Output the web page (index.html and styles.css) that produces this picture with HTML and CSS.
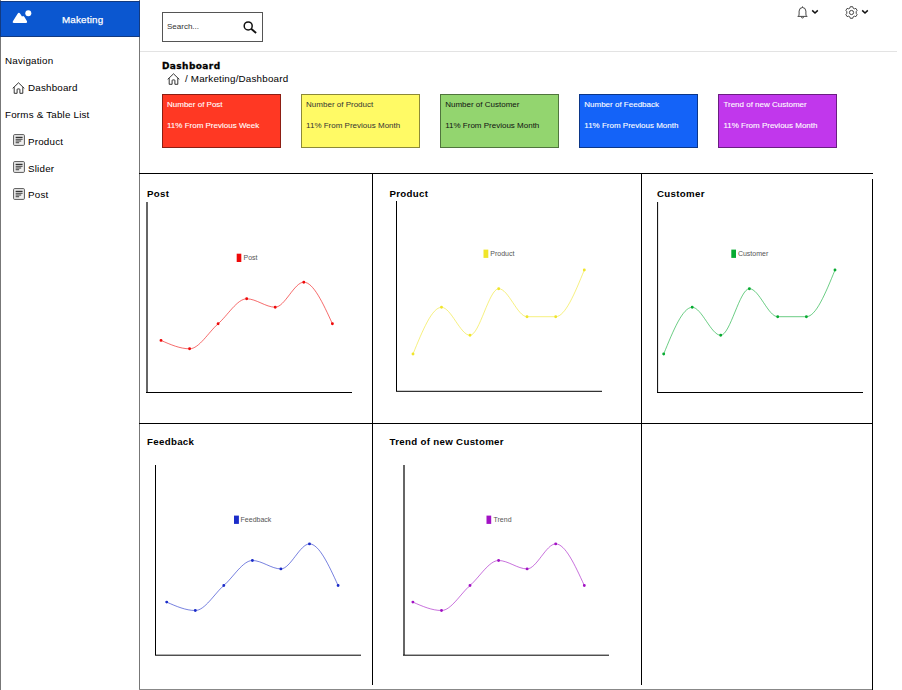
FILE: index.html
```html
<!DOCTYPE html>
<html lang="en">
<head>
<meta charset="utf-8">
<title>Marketing Dashboard</title>
<link rel="stylesheet" href="styles.css">
</head>
<body>
<svg class="defs" aria-hidden="true">
  <symbol id="home" viewBox="0 0 13 12"><path d="M.7 6.400 6.500.8l5.800 5.600M2.200 5.200v6.100h2.900V7.600q0-.7.7-.7h1.400q.7 0 .7.7v3.700h2.900V5.200" fill="none" stroke="currentColor" stroke-width=".8"/></symbol>
  <symbol id="form" viewBox="0 0 12 12"><rect x=".6" y=".6" width="10.800" height="10.800" rx="1" fill="#f0f0f0" stroke="#444" stroke-width=".9"/><path d="M2.600 3.400h7M2.600 5.200h7M2.600 7h5.600M2.600 8.800h3.600" stroke="#333" stroke-width="1.100"/></symbol>
  <symbol id="chevron" viewBox="0 0 8 6"><path d="M1.200 1.400 4 4l2.800-2.600" fill="none" stroke="#111" stroke-width="1.500"/></symbol>
  <g id="wave-a">
    <path d="M0 0C9.500 4.200 19.100 8.400 28.600 8.400S47.600-8.300 57.100-16.600S76.200-41.600 85.700-41.600S104.700-33.200 114.200-33.200S133.300-58.200 142.800-58.200S161.900-37.400 171.400-16.600" fill="none" stroke="currentColor" stroke-width=".6"/>
    <path class="dots" d="M0 0h0M28.600 8.400h0M57.100-16.600h0M85.700-41.600h0M114.200-33.200h0M142.800-58.200h0M171.400-16.600h0"/>
  </g>
  <g id="wave-b">
    <path d="M0 0C9.500-23.300 19-46.700 28.500-46.700S47.500-18.700 57-18.700S76-65.300 85.700-65.300S104.500-37.300 114-37.300H142.700C152.200-37.300 161.800-60.700 171.300-84" fill="none" stroke="currentColor" stroke-width=".6"/>
    <path class="dots" d="M0 0h0M28.500-46.700h0M57-18.700h0M85.700-65.300h0M114-37.300h0M142.700-37.300h0M171.300-84h0"/>
  </g>
</svg>
<div class="app">
  <aside class="sidebar">
    <div class="brand">
      <svg class="logo" width="20" height="14" viewBox="0 0 20 14"><path d="M1.800 13Q0 13 .9 11.300L5.600 3.700Q6.900 1.900 8.200 3.700L10 6.500Q11.200 5.400 12.300 6.700L15 11.300Q15.700 13 14 13Z" fill="#fff"/><circle cx="16.300" cy="3.200" r="3" fill="#fff"/></svg>
      <span>Maketing</span>
    </div>
    <nav class="menu">
      <div class="group">Navigation</div>
      <a class="item"><svg width="13" height="12"><use href="#home"/></svg>Dashboard</a>
      <div class="group">Forms &amp; Table List</div>
      <a class="item"><svg class="form" width="12" height="12"><use href="#form"/></svg>Product</a>
      <a class="item"><svg class="form" width="12" height="12"><use href="#form"/></svg>Slider</a>
      <a class="item"><svg class="form" width="12" height="12"><use href="#form"/></svg>Post</a>
    </nav>
  </aside>
  <main class="main">
    <header class="topbar">
      <div class="search"><span>Search...</span>
        <svg width="14" height="13" viewBox="0 0 14 13"><circle cx="5.200" cy="4.900" r="4" fill="none" stroke="#111" stroke-width="1.500"/><path d="m8.200 7.700 4.900 4.300" stroke="#111" stroke-width="1.900"/></svg>
      </div>
      <div class="actions">
        <div class="action">
          <svg width="11" height="13" viewBox="0 0 11 13"><path d="M.6 10.400h9.800M1.500 10.200q.6-.8.6-2.200V5.100Q2.300 1.600 5.500 1.500q3.200.1 3.400 3.600V8q0 1.400.6 2.200M5.500 1.500V.4M4.300 10.800q.2 1.200 1.200 1.200t1.200-1.200" fill="none" stroke="#333" stroke-width=".9"/></svg>
          <svg width="8" height="6"><use href="#chevron"/></svg>
        </div>
        <div class="action">
          <svg width="13" height="13" viewBox="0 0 13 13"><path d="m5.300.7h2.400l.5 1.500 1.200.6 1.500-.4 1.200 2-.9 1.300v1.600l.9 1.300-1.200 2-1.500-.4-1.200.6-.5 1.500H5.300l-.5-1.500-1.200-.6-1.500.4-1.200-2 .9-1.300V5.700L.9 4.400l1.200-2 1.500.4 1.200-.6Z" fill="none" stroke="#333" stroke-width=".9"/><circle cx="6.500" cy="6.500" r="2.100" fill="none" stroke="#333" stroke-width=".9"/></svg>
          <svg width="8" height="6"><use href="#chevron"/></svg>
        </div>
      </div>
    </header>
    <section class="intro">
      <h1>Dashboard</h1>
      <div class="crumbs"><svg width="13" height="12"><use href="#home"/></svg>/ Marketing/Dashboard</div>
      <div class="cards">
        <div class="card red"><p>Number of Post</p><p>11% From Previous Week</p></div>
        <div class="card yellow"><p>Number of Product</p><p>11% From Previous Month</p></div>
        <div class="card green"><p>Number of Customer</p><p>11% From Previous Month</p></div>
        <div class="card blue"><p>Number of Feedback</p><p>11% From Previous Month</p></div>
        <div class="card purple"><p>Trend of new Customer</p><p>11% From Previous Month</p></div>
      </div>
    </section>
    <section class="charts">
      <article class="cell first">
        <h2>Post</h2>
        <svg class="plot c-red" width="232" height="221" viewBox="140 201 232 221">
          <path d="M147 202V392" stroke="#666" stroke-width="2"/><path d="M146 392.500H352" stroke="#000"/>
          <rect x="236.700" y="253.700" width="4.600" height="8.300"/><text x="243.500" y="260">Post</text>
          <use href="#wave-a" x="161" y="340.400"/>
        </svg>
      </article>
      <article class="cell">
        <h2>Product</h2>
        <svg class="plot c-yellow" width="268" height="221" viewBox="373 201 268 221">
          <path d="M396.500 201V391M396 391.300H602" stroke="#000" fill="none"/>
          <rect x="483.500" y="249.600" width="4.800" height="8.300"/><text x="490.300" y="256">Product</text>
          <use href="#wave-b" x="413" y="354"/>
        </svg>
      </article>
      <article class="cell short">
        <h2>Customer</h2>
        <svg class="plot c-green" width="230" height="221" viewBox="642 201 230 221">
          <path d="M657.600 202V392M657 392.500H863" stroke="#000" fill="none"/>
          <rect x="731.300" y="249.600" width="4.700" height="8.300"/><text x="737.900" y="256">Customer</text>
          <use href="#wave-b" x="663.700" y="354"/>
        </svg>
      </article>
      <article class="cell low first">
        <h2>Feedback</h2>
        <svg class="plot c-blue" width="232" height="233" viewBox="140 452 232 233">
          <path d="M155.500 465V655M155 655.200H361" stroke="#000" fill="none"/>
          <rect x="234" y="515.600" width="4.900" height="8.300"/><text x="240.600" y="522">Feedback</text>
          <use href="#wave-a" x="166.700" y="602.100"/>
        </svg>
      </article>
      <article class="cell low">
        <h2>Trend of new Customer</h2>
        <svg class="plot c-purple" width="268" height="233" viewBox="373 452 268 233">
          <path d="M404 465V655" stroke="#666" stroke-width="2"/><path d="M403 655.200H609" stroke="#000"/>
          <rect x="486.500" y="515.600" width="4.700" height="8.300"/><text x="493.500" y="522">Trend</text>
          <use href="#wave-a" x="412.900" y="602.100"/>
        </svg>
      </article>
      <article class="cell last"></article>
    </section>
  </main>
</div>
</body>
</html>
```
FILE: styles.css
```css
* { box-sizing: border-box; margin: 0; padding: 0; }
body { background: #fff; color: #000; font: 9.800px/12px "Liberation Sans", Arial, sans-serif; letter-spacing: .2px; overflow: hidden; }
svg { flex: none; display: block; }
svg.defs { display: none; }
.app { display: flex; width: 902px; height: 690px; }
.sidebar { width: 140px; flex: none; border-left: 1px solid #777; border-right: 1px solid #777; }
.brand { display: flex; align-items: center; gap: 30px; height: 36px; margin: 1px -1px 0; padding-left: 11px; background: #0b57d0; border: 1px solid #123a80; color: #fff; -webkit-text-stroke: .25px #fff; }
.brand span { margin-top: 2px; }
.logo { margin-bottom: 5px; }
.menu { padding-top: 11px; }
.group, .item { height: 26.800px; display: flex; align-items: center; }
.group { padding-left: 4px; }
.item { padding-left: 11px; gap: 3px; }
.item .form { margin-left: 1px; margin-bottom: 3px; }
.main { flex: 1; min-width: 0; }
.topbar { display: flex; justify-content: space-between; align-items: flex-start; width: 757px; height: 52px; padding: 0 28px 0 22px; border-bottom: 1px solid #e3e3e3; }
.search { display: flex; align-items: center; justify-content: space-between; width: 101px; height: 30px; margin-top: 12px; padding: 0 5px 0 4px; border: 1px solid #555; font-size: 8px; letter-spacing: 0; color: #333; }
.actions { display: flex; gap: 26px; padding-top: 6px; }
.action { display: flex; align-items: center; gap: 3px; }
.action svg:last-child { margin-bottom: 2px; }
.intro { height: 121px; padding: 8px 0 0 22px; }
h1 { font: 700 9px/12px "DejaVu Sans", sans-serif; letter-spacing: .4px; -webkit-text-stroke: .3px #000; }
.crumbs { display: flex; align-items: center; gap: 5px; padding-left: 5px; height: 13px; }
.cards { display: flex; gap: 20.100px; margin-top: 9px; }
.card { width: 119px; height: 54px; padding: 4px; border: 1px solid rgba(0, 0, 0, .45); font-size: 8px; line-height: 11px; letter-spacing: 0; white-space: nowrap; }
.card p + p { margin-top: 10px; }
.red { background: #ff3823; color: #fff; }
.yellow { background: #fffa65; color: #333; }
.green { background: #93d56f; color: #111; }
.blue { background: #1463f8; color: #fff; }
.purple { background: #c137ec; color: #fff; }
.red, .blue, .purple { -webkit-text-stroke: .1px #fff; }
.charts { display: grid; grid-template-columns: 234px 269px 231px; grid-template-rows: 250px 266px; width: 734px; height: 517px; margin-left: -1px; border-top: 1px solid #000; border-bottom: 1px solid #888; }
.cell { border-right: 1px solid #000; border-bottom: 1px solid #000; }
.cell.first { padding-left: 1px; }
.cell h2 { height: 27px; padding: 14px 0 0 16.500px; font-size: 9.700px; line-height: 12px; letter-spacing: .32px; }
.cell.first h2 { padding-left: 7px; }
.cell.short { margin-top: 5px; height: 245px; }
.cell.short h2 { height: 22px; padding: 9px 0 0 15px; }
.cell.low { height: 261px; border-bottom: 0; }
.cell.low h2 { height: 28px; padding-top: 12px; }
.cell.last { border-bottom: 0; }
.plot { font-size: 7px; letter-spacing: 0; }
.plot rect { fill: currentColor; }
.plot text { fill: #555; }
.dots { fill: none; stroke: currentColor; stroke-width: 2.900px; stroke-linecap: round; }
.c-red { color: #ee0909; }
.c-yellow { color: #f0e52b; }
.c-green { color: #08ab32; }
.c-blue { color: #1b2cc9; }
.c-purple { color: #a212c4; }
```
